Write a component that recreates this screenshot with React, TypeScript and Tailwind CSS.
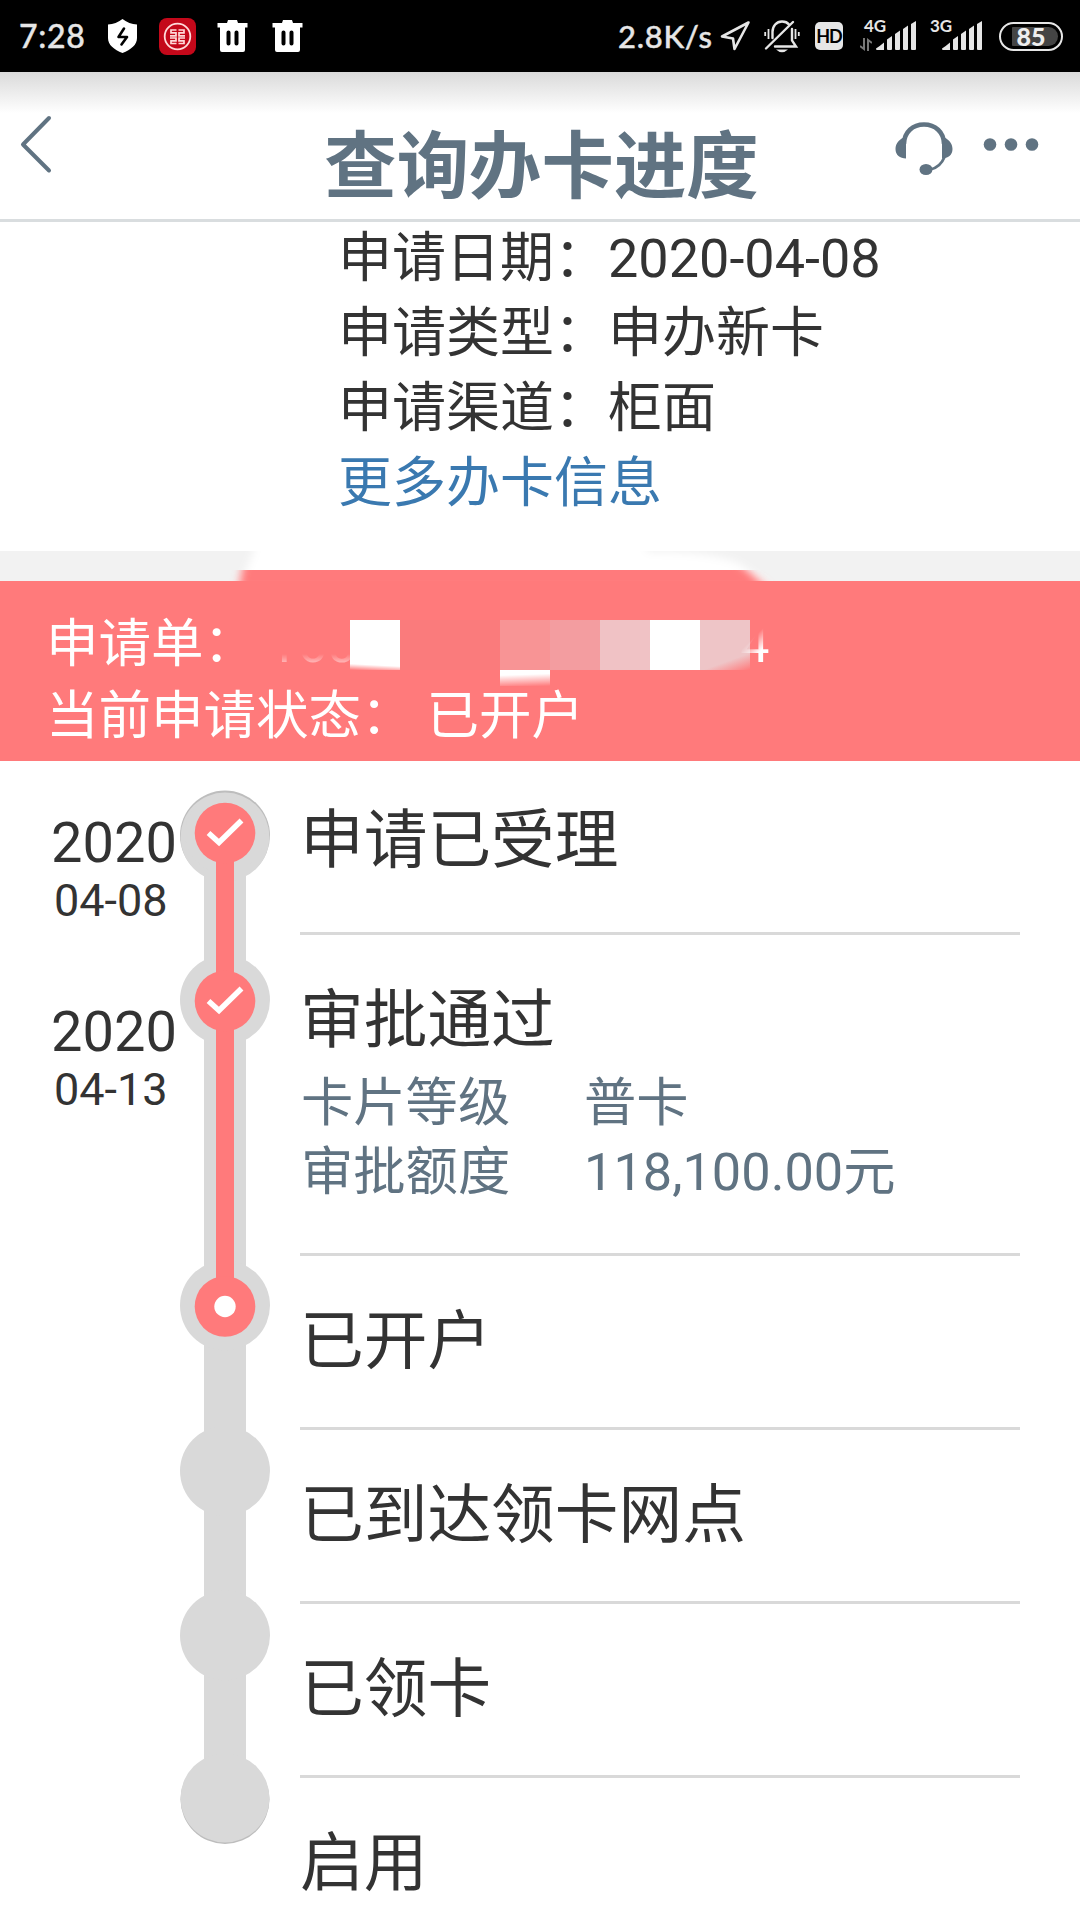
interface Step {
  title: string
  details?: Array<{ label: string; value: string }>
}

const info = [
  { label: '申请日期：', value: '2020-04-08' },
  { label: '申请类型：', value: '申办新卡' },
  { label: '申请渠道：', value: '柜面' },
]

const steps: Step[] = [
  { title: '申请已受理' },
  {
    title: '审批通过',
    details: [
      { label: '卡片等级', value: '普卡' },
      { label: '审批额度', value: '118,100.00元' },
    ],
  },
  { title: '已开户' },
  { title: '已到达领卡网点' },
  { title: '已领卡' },
  { title: '启用' },
]

const dates = [
  { year: '2020', day: '04-08' },
  { year: '2020', day: '04-13' },
]

function TrashIcon() {
  return (
    <svg width="31" height="34" viewBox="0 0 31 34" className="shrink-0">
      <path
        fill="#fff"
        fillRule="evenodd"
        d="M11 1h9l1 3h9.500v4.500H28V31a2 2 0 0 1-2 2H5a2 2 0 0 1-2-2V8.500H.5V4H10zM9.500 13.500v11a2 2 0 0 0 4 0v-11a2 2 0 0 0-4 0zM17.500 13.500v11a2 2 0 0 0 4 0v-11a2 2 0 0 0-4 0z"
      />
    </svg>
  )
}

function SignalIcon() {
  return (
    <svg width="41" height="30" viewBox="0 0 41 30" fill="#e6e6e6">
      <path d="M0 27.500Q4 25 8 21.500V29H1Q0 29 0 27.500z" />
      <path d="M11 18.500l5-3.500V28q0 1-1 1h-3q-1 0-1-1z" />
      <path d="M19 13l5-3.500V28q0 1-1 1h-3q-1 0-1-1z" />
      <path d="M27 8l5-3.500V28q0 1-1 1h-3q-1 0-1-1z" />
      <path d="M35 3l5-3V28q0 1-1 1h-3q-1 0-1-1z" />
    </svg>
  )
}

function StatusBar() {
  return (
    <div className="flex h-[72px] shrink-0 items-center bg-black font-['Lato','Noto_Sans',sans-serif] text-[#e6e6e6]">
      <span className="ml-[19px] w-[89px] text-[32px] leading-[70px] font-medium tracking-[0.7px] [-webkit-text-stroke:0.4px_#e6e6e6]">7:28</span>
      <svg width="29" height="34" viewBox="0 0 29 34" className="shrink-0">
        <path fill="#fff" d="M14.500 0Q21 5 29 5.500V19c0 7-6 11.500-14.500 15C6 30.500 0 26 0 19V5.500Q8 5 14.500 0z" />
        <path fill="none" stroke="#000" strokeWidth="2.600" strokeLinejoin="round" strokeLinecap="round" d="M16 9.500L10.500 18h8.500L13.500 25.500" />
      </svg>
      <svg width="37" height="37" viewBox="0 0 37 37" className="ml-[22px] shrink-0">
        <rect width="37" height="37" rx="8" fill="#c4081a" />
        <circle cx="18.500" cy="18.500" r="12.800" fill="none" stroke="#ffdada" strokeWidth="1.800" />
        <path
          fill="none"
          stroke="#ffdada"
          strokeWidth="1.700"
          d="M17.500 12H12v2.900h5v2.900h-6M19.500 12H25v2.900h-5v2.900h6M11 20h6v2.800h-5v2.700h5.500M26 20h-6v2.800h5v2.700h-5.500"
        />
      </svg>
      <div className="ml-[21px] flex gap-6">
        <TrashIcon />
        <TrashIcon />
      </div>

      <span className="ml-[315px] w-[102px] text-[31px] leading-[70px] font-medium tracking-[0.7px] [-webkit-text-stroke:0.4px_#e6e6e6]">2.8K/s</span>
      <svg width="31" height="32" viewBox="0 0 31 32" className="shrink-0">
        <path fill="none" stroke="#e6e6e6" strokeWidth="2.600" strokeLinejoin="round" d="M28.500 2.500L2 16.500l11 2L14.500 29z" />
      </svg>
      <svg width="36" height="34" viewBox="0 0 36 34" className="ml-[13px] shrink-0" fill="none" stroke="#e6e6e6" strokeWidth="2.400">
        <path d="M8.500 19V13c0-6 4-10.500 9.500-10.500 3 0 5.500 1 7 3M28 10v11.500l4 6H11M2 29.500L29 3" strokeLinecap="round" />
        <path d="M4.500 10v10M1.200 13v4M31.500 10v10M34.800 13v4" strokeWidth="1.800" />
        <path fill="#e6e6e6" stroke="none" d="M12 30.500h12q-6 5.500-12 0z" />
      </svg>
      <div className="ml-[15px] flex h-7 w-7 items-center justify-center rounded-[5px] bg-[#e6e6e6] text-[18px] font-bold leading-none tracking-[-1px] text-black">
        HD
      </div>
      <div className="relative ml-[17px] flex h-[30px] w-[57px] shrink-0 justify-end">
        <span className="absolute left-[4px] top-[-5px] text-[17px] font-bold leading-5">4G</span>
        <svg width="12" height="13" viewBox="0 0 12 13" className="absolute bottom-0 left-0" fill="none" stroke="#777" strokeWidth="2">
          <path d="M4 0v11L0 8M8 13V2l4 3" />
        </svg>
        <SignalIcon />
      </div>
      <div className="relative ml-[9px] flex h-[30px] w-[57px] shrink-0 justify-end">
        <span className="absolute left-[4px] top-[-5px] text-[17px] font-bold leading-5">3G</span>
        <SignalIcon />
      </div>
      <div className="ml-[16px] h-[29px] w-[64px] shrink-0 rounded-full border-[2.500px] border-[#e6e6e6] p-[3px]">
        <div className="flex h-full items-center justify-center rounded-full bg-linear-to-r from-black from-15% to-[#444] to-15% text-[25px] font-black leading-none text-[#eee]">
          85
        </div>
      </div>
    </div>
  )
}

function Header() {
  return (
    <header className="flex h-[150px] shrink-0 items-center justify-between border-b-[3px] border-[#d9dddf] bg-linear-to-b from-[#dadada] to-white to-28% text-[#607382]">
      <svg width="160" height="62" viewBox="0 0 160 62" className="shrink-0">
        <path fill="none" stroke="currentColor" strokeWidth="4" strokeLinecap="round" strokeLinejoin="round" d="M49 3L23 29.500 49 55.500" />
      </svg>
      <h1 className="pl-[3px] pt-[45px] text-[72.400px] font-bold leading-[90px]">查询办卡进度</h1>
      <svg width="160" height="62" viewBox="920 114 160 62" className="shrink-0 overflow-visible" fill="currentColor">
        <path fill="none" stroke="currentColor" strokeWidth="4.500" d="M904 143c0-12 9-19.500 20-19.500s20 7.500 20 19.500" />
        <path d="M906 138v19.500c-6 0-10.500-3.500-10.500-9.500s4-9 7-11zM942 138v19.500c6 0 10.500-3.500 10.500-9.500s-4-9-7-11z" />
        <path fill="none" stroke="currentColor" strokeWidth="2.800" d="M944.500 156q-4 10-14 12.500" />
        <ellipse cx="926" cy="168.500" rx="6.500" ry="5.500" />
        <circle cx="990" cy="143.500" r="6.300" />
        <circle cx="1011" cy="143.500" r="6.300" />
        <circle cx="1032" cy="143.500" r="6.300" />
      </svg>
    </header>
  )
}

/* number of the application, hidden behind a mosaic */
function MaskedNumber() {
  return (
    <div className="relative h-[72px] flex-1">
      <span className="absolute left-[12px] top-0 bg-linear-to-b from-transparent from-64% to-white to-82% bg-clip-text text-transparent opacity-70">
        160
      </span>
      <div className="absolute left-[94px] top-[12px] flex">
        <div className="h-[50px] w-[50px] bg-linear-[183deg] from-white from-88% to-[#ff7a7b]"></div>
        <div className="h-[50px] w-[100px] bg-[#fa7b7c]"></div>
        <div className="h-[50px] w-[50px] bg-[#f89495]"></div>
        <div className="h-[50px] w-[50px] bg-[#f39da0]"></div>
        <div className="h-[50px] w-[50px] bg-[#f0c2c5]"></div>
        <div className="h-[50px] w-[50px] bg-white"></div>
        <div className="h-[50px] w-[50px] bg-linear-[160deg] from-[#eec5c7] from-75% to-[#ff7a7b]"></div>
      </div>
      <div className="absolute left-[244px] top-[62px] h-[16px] w-[50px] bg-linear-[178deg] from-white from-30% to-[#ff7a7b]"></div>
      <span className="absolute left-[484px] top-0 bg-linear-[135deg] from-transparent from-42% to-white to-62% bg-clip-text text-transparent">
        4
      </span>
    </div>
  )
}

function Timeline() {
  return (
    <svg width="90" height="1159" viewBox="180 761 90 1159" className="shrink-0">
      <g fill="#bdbdbd">
        <circle cx="225" cy="835.500" r="45" />
        <circle cx="225" cy="1799.500" r="44.500" />
      </g>
      <g fill="#d9d9d9">
        <rect x="204" y="834" width="42" height="964" />
        <circle cx="225" cy="837" r="44.500" />
        <circle cx="225" cy="833.500" r="40" />
        <circle cx="225" cy="1000" r="45" />
        <circle cx="225" cy="1305.500" r="45" />
        <circle cx="225" cy="1471" r="45" />
        <circle cx="225" cy="1635.500" r="45" />
        <circle cx="225" cy="1798" r="44.500" />
      </g>
      <g fill="#ff7a7b">
        <rect x="216" y="833" width="18" height="474" />
        <circle cx="225" cy="833" r="30.300" />
        <circle cx="225" cy="1001" r="30.300" />
        <circle cx="225" cy="1306.500" r="30.300" />
      </g>
      <circle cx="225" cy="1306.500" r="10.700" fill="#fff" />
      <g fill="none" stroke="#fff" strokeWidth="5.500">
        <path d="M208.500 833l10.500 9.500 22.500-22" />
        <path d="M208.500 1001l10.500 9.500 22.500-22" />
      </g>
    </svg>
  )
}

export default function App() {
  return (
    <div className="flex h-[1920px] w-[1080px] flex-col overflow-hidden bg-white font-['Roboto','Noto_Sans_CJK_SC',sans-serif] text-[#333]">
      <StatusBar />
      <Header />

      {/* Application info */}
      <section className="-mt-px h-[330px] shrink-0 pl-[338px] text-[54px] leading-[75px]">
        {info.map((row) => (
          <p key={row.label}>
            {row.label}
            {row.value}
          </p>
        ))}
        <a className="text-[#3a79b0]">更多办卡信息</a>
      </section>

      <svg width="1080" height="30" viewBox="0 551 1080 30" className="shrink-0">
        <defs>
          <filter id="soft" x="-10%" y="-50%" width="120%" height="200%">
            <feGaussianBlur stdDeviation="4" />
          </filter>
        </defs>
        <rect y="551" width="1080" height="30" fill="#f2f2f2" />
        <path d="M238 590L254 551 254 530H640l8 22q60-1 90 11l34 24z" fill="#fff" filter="url(#soft)" />
        <clipPath id="edge">
          <rect y="570" width="1080" height="11" />
        </clipPath>
        <g clipPath="url(#edge)">
          <path d="M238 590l6-30H736l34 30z" fill="#ff7a7b" filter="url(#soft)" />
        </g>
      </svg>

      {/* Current state */}
      <section className="h-[180px] shrink-0 bg-[#ff7a7b] pl-[46px] pt-[27px] text-[52.500px] leading-[72px] text-white">
        <div className="flex">
          <span>申请单：</span>
          <MaskedNumber />
        </div>
        <p>当前申请状态： 已开户</p>
      </section>

      {/* Progress */}
      <section className="flex flex-1">
        <div className="flex w-[180px] shrink-0 flex-col gap-[73px] pl-[51px] pt-[52px]">
          {dates.map((date) => (
            <div key={date.day}>
              <p className="text-[56px] leading-[60px]">{date.year}</p>
              <p className="pl-[3px] text-[45px] leading-[56px]">{date.day}</p>
            </div>
          ))}
        </div>
        <Timeline />
        <div className="ml-[30px] w-[720px]">
          {steps.map((step, i) => (
            <div
              key={step.title}
              className={`border-b-[3px] border-[#d9d9d9] ${i === 0 ? 'pt-[44px]' : 'pt-[50px]'} ${
                step.details ? 'h-[321px]' : 'h-[174px]'
              }`}
            >
              <h2 className="text-[63.700px] leading-[72px]">{step.title}</h2>
              {step.details && (
                <dl className="mt-3 pl-px text-[52.300px] leading-[69px] text-[#607382]">
                  {step.details.map((d) => (
                    <div key={d.label} className="flex">
                      <dt className="w-[283px]">{d.label}</dt>
                      <dd>{d.value}</dd>
                    </div>
                  ))}
                </dl>
              )}
            </div>
          ))}
        </div>
      </section>
    </div>
  )
}
